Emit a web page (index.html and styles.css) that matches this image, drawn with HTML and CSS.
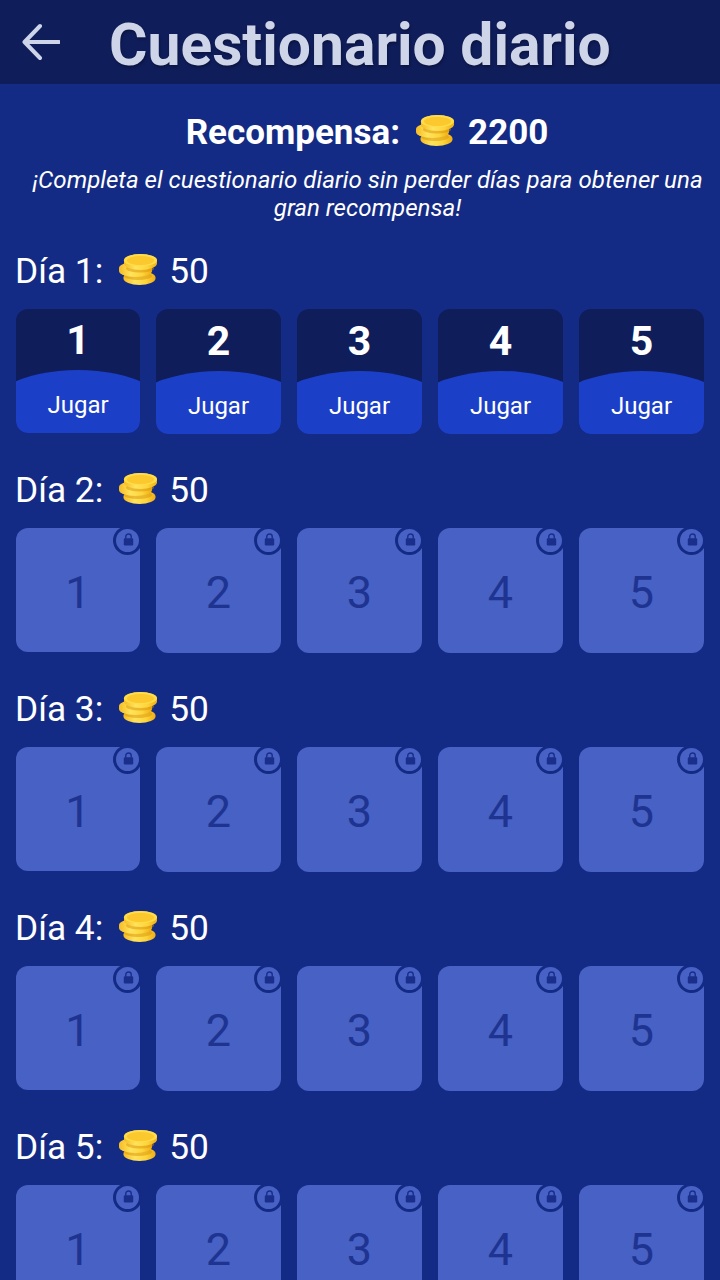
FILE: index.html
```html
<!DOCTYPE html>
<html lang="es">
<head>
<meta charset="utf-8">
<title>Cuestionario diario</title>
<link rel="stylesheet" href="styles.css">
</head>
<body>
<svg class="defs" width="0" height="0" aria-hidden="true">
  <defs>
    <linearGradient id="cg" x1="0" x2="1" y1="0" y2="0">
      <stop offset="0" stop-color="#f6bb22"/>
      <stop offset="0.35" stop-color="#ffe35c"/>
      <stop offset="0.7" stop-color="#fdd53c"/>
      <stop offset="1" stop-color="#f0ad14"/>
    </linearGradient>
    <symbol id="coins" viewBox="0 0 38 31">
      <rect x="4.500" y="17" width="32" height="14" rx="16" ry="6.500" fill="url(#cg)"/>
      <ellipse cx="19" cy="22" rx="14" ry="4" fill="#d8930c" opacity="0.5"/>
      <rect x="0" y="8" width="33" height="15" rx="16.500" ry="6" fill="url(#cg)"/>
      <ellipse cx="21" cy="14.500" rx="14" ry="4" fill="#d8930c" opacity="0.5"/>
      <rect x="5" y="0" width="33" height="16" rx="16.500" ry="6.500" fill="url(#cg)"/>
      <ellipse cx="21.500" cy="6.200" rx="16.500" ry="6.200" fill="#ffdc48"/>
      <ellipse cx="21.500" cy="6.500" rx="13.500" ry="4.500" fill="#fbc82e"/>
    </symbol>
    <symbol id="lock" viewBox="0 0 14 16">
      <path d="M3.500 7V4.500a3.500 3.500 0 0 1 7 0V7" fill="none" stroke="#1a2f8c" stroke-width="1.800"/>
      <rect x="1" y="6.500" width="12" height="9" rx="1.500" fill="#1a2f8c"/>
    </symbol>
  </defs>
</svg>

<header class="topbar">
  <svg class="back" viewBox="0 0 38 38" aria-hidden="true">
    <path d="M37 19H3M18 3 2.500 19 18 35" fill="none" stroke="#cfd5e8" stroke-width="4" stroke-linecap="round" stroke-linejoin="round"/>
  </svg>
  <h1 class="title">Cuestionario diario</h1>
</header>

<main class="content">
  <section class="intro">
    <div class="reward">
      <span>Recompensa:</span>
      <svg class="coin"><use href="#coins"/></svg>
      <span>2200</span>
    </div>
    <p class="desc">¡Completa el cuestionario diario sin perder días para obtener una gran recompensa!</p>
  </section>

  <section class="day">
    <div class="day-label"><span>Día 1:</span><svg class="coin"><use href="#coins"/></svg><span>50</span></div>
    <div class="grid">
      <div class="card open"><div class="num">1</div><div class="play">Jugar</div></div>
      <div class="card open"><div class="num">2</div><div class="play">Jugar</div></div>
      <div class="card open"><div class="num">3</div><div class="play">Jugar</div></div>
      <div class="card open"><div class="num">4</div><div class="play">Jugar</div></div>
      <div class="card open"><div class="num">5</div><div class="play">Jugar</div></div>
    </div>
  </section>

  <section class="day">
    <div class="day-label"><span>Día 2:</span><svg class="coin"><use href="#coins"/></svg><span>50</span></div>
    <div class="grid">
      <div class="card locked">1<span class="badge"><svg class="lock"><use href="#lock"/></svg></span></div>
      <div class="card locked">2<span class="badge"><svg class="lock"><use href="#lock"/></svg></span></div>
      <div class="card locked">3<span class="badge"><svg class="lock"><use href="#lock"/></svg></span></div>
      <div class="card locked">4<span class="badge"><svg class="lock"><use href="#lock"/></svg></span></div>
      <div class="card locked">5<span class="badge"><svg class="lock"><use href="#lock"/></svg></span></div>
    </div>
  </section>

  <section class="day">
    <div class="day-label"><span>Día 3:</span><svg class="coin"><use href="#coins"/></svg><span>50</span></div>
    <div class="grid">
      <div class="card locked">1<span class="badge"><svg class="lock"><use href="#lock"/></svg></span></div>
      <div class="card locked">2<span class="badge"><svg class="lock"><use href="#lock"/></svg></span></div>
      <div class="card locked">3<span class="badge"><svg class="lock"><use href="#lock"/></svg></span></div>
      <div class="card locked">4<span class="badge"><svg class="lock"><use href="#lock"/></svg></span></div>
      <div class="card locked">5<span class="badge"><svg class="lock"><use href="#lock"/></svg></span></div>
    </div>
  </section>

  <section class="day">
    <div class="day-label"><span>Día 4:</span><svg class="coin"><use href="#coins"/></svg><span>50</span></div>
    <div class="grid">
      <div class="card locked">1<span class="badge"><svg class="lock"><use href="#lock"/></svg></span></div>
      <div class="card locked">2<span class="badge"><svg class="lock"><use href="#lock"/></svg></span></div>
      <div class="card locked">3<span class="badge"><svg class="lock"><use href="#lock"/></svg></span></div>
      <div class="card locked">4<span class="badge"><svg class="lock"><use href="#lock"/></svg></span></div>
      <div class="card locked">5<span class="badge"><svg class="lock"><use href="#lock"/></svg></span></div>
    </div>
  </section>

  <section class="day">
    <div class="day-label"><span>Día 5:</span><svg class="coin"><use href="#coins"/></svg><span>50</span></div>
    <div class="grid">
      <div class="card locked">1<span class="badge"><svg class="lock"><use href="#lock"/></svg></span></div>
      <div class="card locked">2<span class="badge"><svg class="lock"><use href="#lock"/></svg></span></div>
      <div class="card locked">3<span class="badge"><svg class="lock"><use href="#lock"/></svg></span></div>
      <div class="card locked">4<span class="badge"><svg class="lock"><use href="#lock"/></svg></span></div>
      <div class="card locked">5<span class="badge"><svg class="lock"><use href="#lock"/></svg></span></div>
    </div>
  </section>
</main>
</body>
</html>
```

FILE: styles.css
```css
* { box-sizing: border-box; }
html, body { margin: 0; padding: 0; }
body {
  height: 1280px;
  overflow: hidden;
  background: #142b85;
  color: #fff;
  font-family: Roboto, "Liberation Sans", sans-serif;
}
.defs { position: absolute; }

.topbar {
  height: 84px;
  background: #0f1d5b;
  display: flex;
  align-items: center;
  padding-left: 22px;
}
.back { width: 38px; height: 38px; margin-top: -1px; flex: none; }
.title {
  margin: 0 0 0 49px;
  padding-top: 6px;
  font-size: 58.8px;
  font-weight: 700;
  line-height: 78px;
  color: #cfd5e8;
  text-shadow: 1px 2px 3px rgba(0, 0, 0, 0.3);
  white-space: nowrap;
}

.content { padding: 0 16px; }

.intro { padding: 26px 0 0 14px; }
.reward {
  display: flex;
  justify-content: center;
  align-items: center;
  gap: 15px;
  height: 44px;
  font-size: 35px;
  font-weight: 700;
}
.coin { width: 38px; height: 31px; flex: none; margin: 0 -1px 4px 1px; }
.desc {
  margin: 12px 0 0;
  padding-left: 1px;
  font-size: 24.1px;
  line-height: 28px;
  font-style: italic;
  text-align: center;
}

.day { margin-bottom: 34px; }
.intro + .day { margin-top: 27px; }
.day-label {
  display: flex;
  align-items: center;
  gap: 14px;
  height: 44px;
  margin: 0 0 16px -1px;
  font-size: 35.3px;
}
.day-label .coin { margin: 0 -2px 4px 2px; }
.grid {
  display: grid;
  grid-template-columns: 124px repeat(4, 125px);
  gap: 16px;
  align-items: start;
}
.card {
  position: relative;
  aspect-ratio: 1;
  border-radius: 12px;
}
.open {
  display: flex;
  flex-direction: column;
  overflow: hidden;
  background: #0f1d5b;
}
.num {
  flex: 1;
  display: flex;
  align-items: center;
  justify-content: center;
  padding-top: 1px;
  font-size: 41px;
  font-weight: 700;
}
.play {
  flex: none;
  align-self: center;
  width: 160%;
  height: 63px;
  display: flex;
  align-items: center;
  justify-content: center;
  padding-top: 6px;
  background: #1c3fc8;
  border-radius: 50% 50% 0 0 / 51px 51px 0 0;
  font-size: 24px;
}
.locked {
  display: flex;
  align-items: center;
  justify-content: center;
  padding-top: 4px;
  background: #4761c4;
  color: #1e3490;
  font-size: 45px;
}
.badge {
  position: absolute;
  top: -2px;
  right: -2px;
  width: 29px;
  height: 29px;
  padding: 0 0 2px 2px;
  border: 3px solid #142b85;
  border-radius: 50%;
  background: #4761c4;
  display: flex;
  align-items: center;
  justify-content: center;
}
.lock { width: 11px; height: 13px; }
```
